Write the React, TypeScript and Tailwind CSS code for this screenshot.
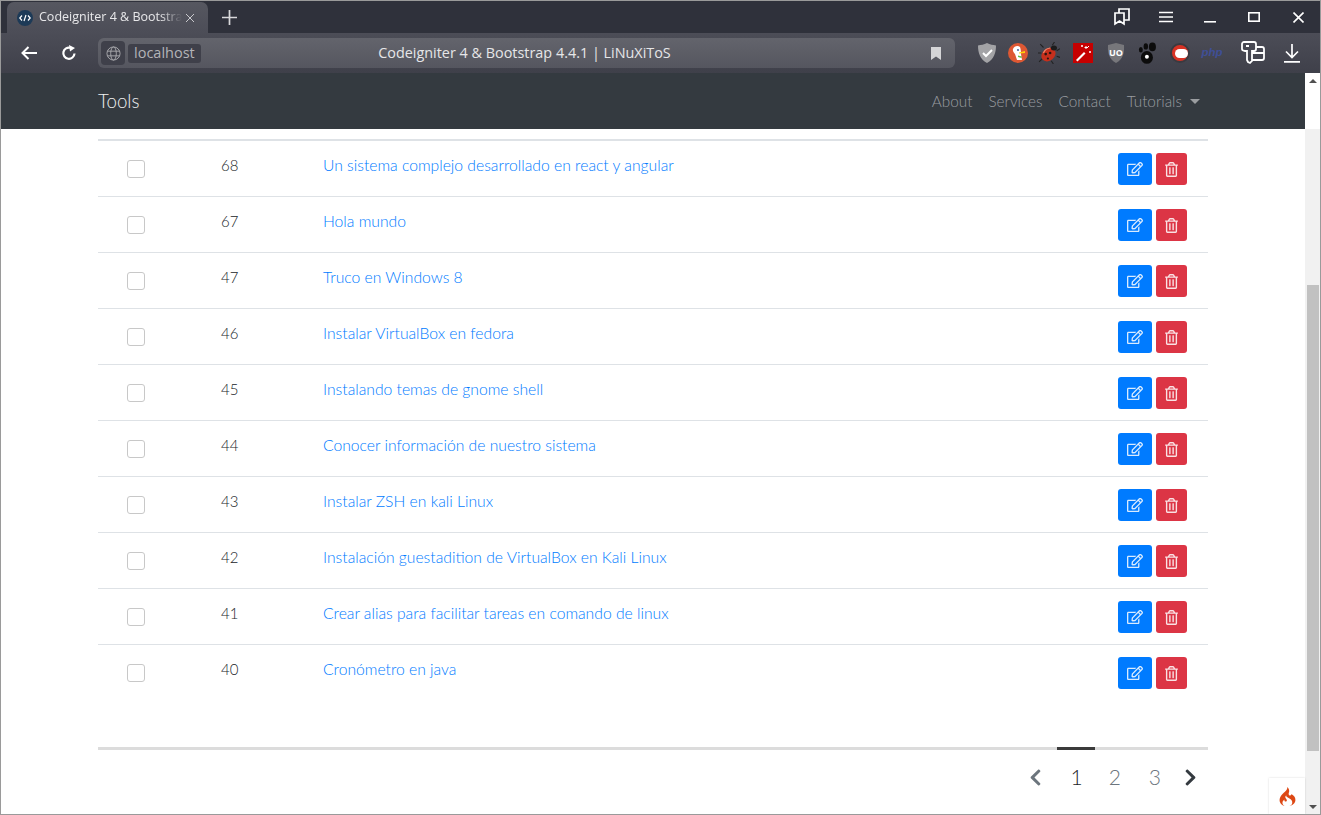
import { FaRegEdit, FaRegTrashAlt, FaChevronLeft, FaChevronRight } from 'react-icons/fa';
import { SiCodeigniter } from 'react-icons/si';

const rows = [
  { id: 68, title: 'Un sistema complejo desarrollado en react y angular' },
  { id: 67, title: 'Hola mundo' },
  { id: 47, title: 'Truco en Windows 8' },
  { id: 46, title: 'Instalar VirtualBox en fedora' },
  { id: 45, title: 'Instalando temas de gnome shell' },
  { id: 44, title: 'Conocer información de nuestro sistema' },
  { id: 43, title: 'Instalar ZSH en kali Linux' },
  { id: 42, title: 'Instalación guestadition de VirtualBox en Kali Linux' },
  { id: 41, title: 'Crear alias para facilitar tareas en comando de linux' },
  { id: 40, title: 'Cronómetro en java' },
];

function TabBar() {
  return (
    <div className="flex h-[32px] items-end bg-[#2f313b] font-['Open_Sans',sans-serif]">
      <div className="ml-[6px] flex h-[31px] w-[201px] items-center rounded-t-[7px] bg-gradient-to-b from-[#565760] to-[#4c4d57] pl-[10px] pr-[9px]">
        <svg viewBox="0 0 16 16" className="h-[16px] w-[16px] shrink-0">
          <circle cx="8" cy="8" r="8" fill="#1d3a57" />
          <path d="M5 5.5 2.8 8 5 10.5M11 5.5 13.2 8 11 10.5M9 5 7 11" fill="none" stroke="#fff" strokeWidth="1.2" />
        </svg>
        <span className="ml-[6px] w-[143px] overflow-hidden whitespace-nowrap text-[12.5px] text-[#e8e8ea] [mask-image:linear-gradient(to_right,black_85%,transparent)]">
          Codeigniter 4 &amp; Bootstra
        </span>
        <svg viewBox="0 0 10 10" className="ml-[3px] h-[10px] w-[10px] shrink-0">
          <path d="M1 1 9 9M9 1 1 9" stroke="#c9c9cd" strokeWidth="1" />
        </svg>
      </div>
      <div className="mb-[8px] ml-[14px]">
        <svg viewBox="0 0 14 14" className="h-[15px] w-[15px]">
          <path d="M7 0v14M0 7h14" stroke="#d8d8da" strokeWidth="1.6" />
        </svg>
      </div>
      <div className="flex-1" />
      <div className="mb-[7px] flex items-center">
        <svg viewBox="0 0 16 18" className="h-[18px] w-[16px]">
          <path d="M1 5h9v11l-4.5-3L1 16zM5 5V1h10v11l-5 0" fill="none" stroke="#fff" strokeWidth="1.7" />
        </svg>
        <svg viewBox="0 0 14 12" className="ml-[29px] h-[12px] w-[14px]">
          <path d="M0 1.5h14M0 6h14M0 10.5h14" stroke="#fff" strokeWidth="1.6" />
        </svg>
        <svg viewBox="0 0 12 12" className="ml-[31px] h-[12px] w-[12px]">
          <path d="M0 10.8h12" stroke="#fff" strokeWidth="1.6" />
        </svg>
        <svg viewBox="0 0 12 10" className="ml-[32px] h-[10px] w-[12px]">
          <rect x="0.8" y="0.8" width="10.4" height="8.4" fill="none" stroke="#fff" strokeWidth="1.6" />
        </svg>
        <svg viewBox="0 0 11 11" className="ml-[33px] mr-[16px] h-[11px] w-[11px]">
          <path d="M.5.5l10 10M10.5.5l-10 10" stroke="#fff" strokeWidth="1.6" />
        </svg>
      </div>
    </div>
  );
}

function Extensions() {
  return (
    <div className="flex items-center">
      <div className="flex w-[30px] justify-center">
        <svg viewBox="0 0 20 20" className="h-[20px] w-[20px]">
          <path d="M10 0c3 1.5 6 2 9 2.5C19 10 17 16 10 20 3 16 1 10 1 2.5 4 2 7 1.5 10 0z" fill="#a3a3a6" />
          <path d="m6 10 3 3 6-6" fill="none" stroke="#fff" strokeWidth="2" />
        </svg>
      </div>
      <div className="flex w-[31px] justify-center">
        <svg viewBox="0 0 20 20" className="h-[20px] w-[20px]">
          <circle cx="10" cy="10" r="10" fill="#de5833" />
          <path d="M5 6c1-3 5-4 7-2 1 3 1 5 1 7l1 6H9L7 11C5.5 9.5 4.5 8 5 6z" fill="#fff" />
          <path d="M11 9.5l6-1.5v2l-6 .5z" fill="#fdd20a" />
          <path d="M10 12.5l4 1-.5 1.5-3.5-1z" fill="#65bc46" />
          <circle cx="10" cy="7" r=".9" fill="#2d4f8e" />
        </svg>
      </div>
      <div className="flex w-[32px] justify-center">
        <svg viewBox="0 0 20 20" className="h-[22px] w-[22px]">
          <path d="M5 5 2 2M3 10H0M4 15l-3 3M13 3l2-3M17 8l3-2M17 13l3 1M12 17l2 3" stroke="#222" strokeWidth="1" />
          <ellipse cx="9.5" cy="11.5" rx="7" ry="5.5" transform="rotate(-40 9.5 11.5)" fill="#c62f1c" />
          <ellipse cx="14.5" cy="5.5" rx="2.8" ry="2.3" fill="#1c1c1c" />
          <circle cx="7" cy="11" r="1.2" fill="#2b1510" />
          <circle cx="11" cy="10" r="1.2" fill="#2b1510" />
          <circle cx="9" cy="15" r="1" fill="#2b1510" />
          <path d="M5 10c1-3 3-4 6-4.5" stroke="#f08a70" strokeWidth="1" fill="none" />
        </svg>
      </div>
      <div className="flex w-[35px] justify-center">
        <svg viewBox="0 0 20 20" className="h-[20px] w-[20px]">
          <rect width="20" height="20" fill="#c60000" />
          <path d="m3 17 8-8 1.5 1.5-8 8z" fill="#fff" />
          <path d="M13 3v3M11.5 4.5h3M17 8v2M16 9h2M9 2v2M8 3h2M16 3l-2 2" stroke="#fff" strokeWidth="1" />
        </svg>
      </div>
      <div className="flex w-[32px] justify-center">
        <svg viewBox="0 0 18 20" className="h-[20px] w-[18px]">
          <path d="M9 0l8 2c.5 8-1 14-8 18C2 16 .5 10 1 2z" fill="#77777b" />
          <text x="9" y="13" textAnchor="middle" fontSize="9" fontWeight="700" fill="#fff">UO</text>
        </svg>
      </div>
      <div className="flex w-[32px] justify-center">
        <svg viewBox="0 0 20 20" className="h-[22px] w-[22px]">
          <ellipse cx="9" cy="14" rx="5.5" ry="5.8" fill="#0c0c0c" />
          <ellipse cx="3.5" cy="7" rx="1.8" ry="2.5" fill="#0c0c0c" />
          <ellipse cx="8" cy="4" rx="2" ry="2.9" fill="#0c0c0c" />
          <ellipse cx="14" cy="4.5" rx="3.2" ry="4" fill="#0c0c0c" />
          <circle cx="9" cy="13.5" r="1.8" fill="#fff" />
        </svg>
      </div>
      <div className="flex w-[32px] justify-center">
        <div className="flex h-[20px] w-[20px] items-center justify-center rounded-full border-2 border-[#3a3a40] bg-[#d83224]">
          <div className="ml-[3px] h-[9px] w-[13px] rounded-full bg-white" />
        </div>
      </div>
      <div className="flex w-[32px] justify-center">
        <span className="font-['Liberation_Sans',sans-serif] text-[11.5px] font-bold italic leading-none text-[#3f4f96]">php</span>
      </div>
      <svg viewBox="0 0 24 24" className="ml-[13px] h-[24px] w-[24px]">
        <path d="M3 1h10c1 0 2 1 2 2v5c0 1-1 2-2 2h-2v10l-2 2-2-1-1-2V10H4c-2 0-3-1-3-2V3c0-1 1-2 2-2z" fill="none" stroke="#fff" strokeWidth="1.8" />
        <path d="M15 6h6c1 0 2 1 2 2v9c0 1-1 2-2 2H11M11 12h12" fill="none" stroke="#fff" strokeWidth="1.8" />
        <rect x="5" y="4" width="3" height="2" fill="#fff" />
      </svg>
      <svg viewBox="0 0 16 20" className="ml-[19px] mr-[20px] h-[20px] w-[16px]">
        <path d="M8 1v13M2 8.5l6 6 6-6M0 18.8h16" fill="none" stroke="#fff" strokeWidth="1.7" />
      </svg>
    </div>
  );
}

function Toolbar() {
  return (
    <div className="flex h-[40px] items-center bg-gradient-to-b from-[#4c4d57] to-[#3f404a] font-['Open_Sans',sans-serif]">
      <svg viewBox="0 0 16 14" className="ml-[20px] h-[14px] w-[16px]">
        <path d="M16 7H1.5M7.5 1 1.5 7l6 6" fill="none" stroke="#fff" strokeWidth="2" />
      </svg>
      <svg viewBox="0 0 16 16" className="ml-[24px] h-[16px] w-[16px]">
        <path d="M13.5 8.5A5.6 5.6 0 1 1 9.5 2.8" fill="none" stroke="#fff" strokeWidth="2.2" />
        <path d="M8 0l6 3-5 3.5z" fill="#fff" />
      </svg>
      <div className="relative ml-[21px] flex h-[30px] w-[857px] items-center rounded-[6px] bg-gradient-to-b from-[#63646c] to-[#55565f] pl-[3px] pr-[12px]">
        <div className="flex h-[24px] w-[24px] items-center justify-center rounded-[4px] bg-[#3f404a]">
          <svg viewBox="0 0 16 16" className="h-[15px] w-[15px]">
            <g fill="none" stroke="#a9a9ad" strokeWidth="1">
              <circle cx="8" cy="8" r="7" />
              <ellipse cx="8" cy="8" rx="3" ry="7" />
              <path d="M1.5 5.5h13M1.5 10.5h13" />
            </g>
          </svg>
        </div>
        <div className="ml-[3px] flex h-[19px] items-center rounded-[3px] bg-[#3f404a] px-[6px] text-[14.5px] leading-none text-[#b4b4b8]">localhost</div>
        <div className="absolute inset-x-0 pr-[4px] text-center text-[14.4px] leading-none text-[#e6e6e8]">Codeigniter 4 &amp; Bootstrap 4.4.1 | LiNuXiToS</div>
        <svg viewBox="0 0 10 13" className="ml-auto mr-[2px] h-[13px] w-[10px]">
          <path d="M0 0h10v13L5 9.5 0 13z" fill="#d5d5d7" />
        </svg>
      </div>
      <div className="flex-1" />
      <Extensions />
    </div>
  );
}

function Navbar() {
  return (
    <nav className="flex h-[56px] shrink-0 items-center justify-center bg-[#343a40]">
      <div className="flex w-[1110px] items-center">
        <span className="mt-[1px] text-[18.7px] font-light leading-none text-[#f0f0f0]">Tools</span>
        <div className="ml-auto flex items-center gap-[16px] pr-[8px] text-[15.3px] font-light text-[#9a9da0]">
          <span>About</span>
          <span>Services</span>
          <span>Contact</span>
          <span className="flex items-center">
            Tutorials
            <span className="ml-[8px] h-0 w-0 border-x-[5px] border-t-[5px] border-x-transparent border-t-[#9a9da0]" />
          </span>
        </div>
      </div>
    </nav>
  );
}

function Row({ id, title }: { id: number; title: string }) {
  return (
    <div className="flex h-[56px] items-start border-b border-[#dee2e6] last:border-b-0">
      <div className="ml-[29px] mt-[19px] h-[18px] w-[18px] rounded-[3px] border border-[#c8c8c8] bg-white" />
      <div className="ml-[76px] mt-[12px] w-[102px] text-[15px] font-light leading-[24px] text-[#212529]">{id}</div>
      <a className="mt-[12px] text-[15.7px] font-light leading-[24px] text-[#007bff]">{title}</a>
      <div className="ml-auto mr-[21px] mt-[12px] flex gap-[4px]">
        <button className="flex h-[32px] w-[34px] items-center justify-center rounded-[3px] bg-[#007bff] text-white">
          <FaRegEdit className="h-[16px] w-[16px] opacity-85" />
        </button>
        <button className="flex h-[32px] w-[31px] items-center justify-center rounded-[3px] bg-[#dc3545] text-white">
          <FaRegTrashAlt className="h-[15px] w-[13px] opacity-85" />
        </button>
      </div>
    </div>
  );
}

function Pager() {
  return (
    <div className="mt-[46px]">
      <div className="relative h-[3px] bg-[#dcdcdc]">
        <div className="absolute left-[959px] top-0 h-[3px] w-[38px] bg-[#3b3b3b]" />
      </div>
      <div className="mt-[12px] flex items-center justify-end pr-[10px] text-[21px] font-light leading-[30px]">
        <FaChevronLeft className="h-[19px] w-[15px] text-[#6c757d]" />
        <span className="ml-[27px] text-[#212529]">1</span>
        <span className="ml-[26px] text-[#6c757d]">2</span>
        <span className="ml-[28px] text-[#6c757d]">3</span>
        <FaChevronRight className="ml-[22px] h-[19px] w-[15px] text-[#343a40]" />
      </div>
    </div>
  );
}

export default function App() {
  return (
    <div className="flex h-[815px] w-[1321px] flex-col overflow-hidden border border-[#9a9a9a] bg-white font-['Lato','Open_Sans',sans-serif]">
      <TabBar />
      <Toolbar />
      <div className="relative flex flex-1 overflow-hidden">
        <div className="flex min-w-0 flex-1 flex-col">
          <Navbar />
          <div className="mx-auto w-[1110px] pt-[10px]">
            <div className="h-[2px] bg-[#dee2e6]" />
            <div>
              {rows.map((r) => (
                <Row key={r.id} id={r.id} title={r.title} />
              ))}
            </div>
            <Pager />
          </div>
        </div>
        <div className="flex w-[15px] shrink-0 flex-col items-center bg-[#f1f1f1]">
          <div className="flex h-[56px] w-full items-start justify-center bg-white pt-[6px]">
            <span className="h-0 w-0 border-x-[4px] border-b-[4px] border-x-transparent border-b-[#505050]" />
          </div>
          <div className="mt-[156px] h-[466px] w-[12px] bg-[#c1c1c1]" />
          <div className="mt-auto flex h-[15px] w-full items-center justify-center">
            <span className="h-0 w-0 border-x-[4px] border-t-[4px] border-x-transparent border-t-[#505050]" />
          </div>
        </div>
        <div className="absolute bottom-0 right-[15px] flex h-[36px] w-[36px] items-center justify-center bg-white shadow-[0_0_2px_rgba(0,0,0,0.15)]">
          <SiCodeigniter className="h-[19px] w-[19px] text-[#dd4814]" />
        </div>
      </div>
    </div>
  );
}
